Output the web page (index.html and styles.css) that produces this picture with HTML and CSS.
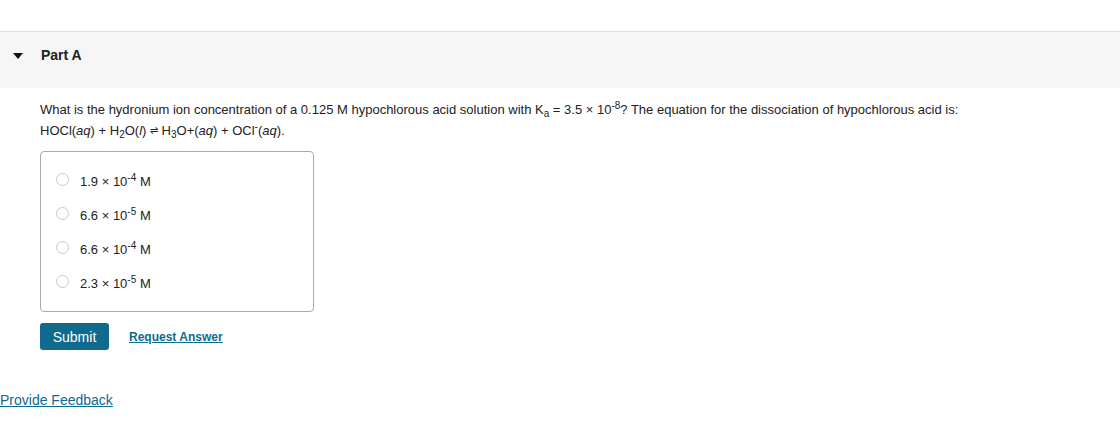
FILE: index.html
```html
<!DOCTYPE html>
<html>
<head>
<meta charset="utf-8">
<link rel="stylesheet" href="styles.css">
</head>
<body>
<div class="top-space"></div>
<div class="part-header">
  <span class="caret"></span>
  <span class="part-title">Part A</span>
</div>
<div class="part-body">
  <p class="question">What is the hydronium ion concentration of a 0.125 M hypochlorous acid solution with K<sub>a</sub> = 3.5 × 10<sup>-8</sup>? The equation for the dissociation of hypochlorous acid is:<br>HOCl(<i>aq</i>) + H<sub>2</sub>O(<i>l</i>) <span class="eq">⇌</span> H<sub>3</sub>O+(<i>aq</i>) + OCl<sup>-</sup>(<i>aq</i>).</p>
  <div class="choices">
    <label class="choice"><span class="radio"></span><span>1.9 × 10<sup>-4</sup> M</span></label>
    <label class="choice"><span class="radio"></span><span>6.6 × 10<sup>-5</sup> M</span></label>
    <label class="choice"><span class="radio"></span><span>6.6 × 10<sup>-4</sup> M</span></label>
    <label class="choice"><span class="radio"></span><span>2.3 × 10<sup>-5</sup> M</span></label>
  </div>
  <div class="actions">
    <button class="submit">Submit</button>
    <a class="request" href="#">Request Answer</a>
  </div>
</div>
<a class="feedback" href="#">Provide Feedback</a>
</body>
</html>
```
FILE: styles.css
```css
html, body {
  margin: 0;
  padding: 0;
  background: #fff;
  font-family: "Liberation Sans", Arial, Helvetica, sans-serif;
  color: #333;
}
.top-space {
  height: 31px;
}
.part-header {
  border-top: 1px solid #dcdcdc;
  background: #f6f6f6;
  height: 57px;
  box-sizing: border-box;
  padding-top: 14px;
  display: flex;
  align-items: flex-start;
}
.caret {
  width: 0;
  height: 0;
  border-left: 5px solid transparent;
  border-right: 5px solid transparent;
  border-top: 6px solid #111;
  margin-left: 13px;
  margin-top: 7px;
}
.part-title {
  margin-left: 18px;
  font-size: 14px;
  line-height: 18px;
  font-weight: bold;
  color: #222;
}
.part-body {
  padding: 11px 0 0 40px;
}
.question {
  margin: 0;
  font-size: 13px;
  line-height: 21px;
  color: #222;
}
.question sub, .question sup {
  font-size: 10px;
  line-height: 0;
}
.question sup {
  vertical-align: 5px;
}
.question sub {
  vertical-align: -3px;
}
.eq {
  font-size: 10px;
  vertical-align: 1px;
}
.choices {
  margin-top: 10px;
  width: 272px;
  height: 147px;
  border: 1px solid #a9a9a9;
  border-radius: 4px;
  box-sizing: content-box;
  padding-top: 12px;
  display: flex;
  flex-direction: column;
}
.choice {
  display: flex;
  align-items: center;
  height: 34px;
  flex: none;
  font-size: 13px;
  color: #222;
}
.choice sup {
  font-size: 10px;
  line-height: 0;
  vertical-align: 5px;
}
.radio {
  width: 11px;
  height: 11px;
  border: 1px solid #c8c8c8;
  border-radius: 50%;
  margin-left: 15px;
  margin-right: 11px;
  margin-top: -4px;
  background: #fff;
}
.actions {
  margin-top: 11px;
  display: flex;
  align-items: center;
}
.submit {
  height: 27px;
  width: 69px;
  padding: 0;
  border: 0;
  border-radius: 3px;
  background: #0f6a8d;
  color: #fff;
  font-family: "Liberation Sans", Arial, sans-serif;
  font-size: 14px;
}
.request {
  margin-left: 20px;
  font-size: 12px;
  font-weight: bold;
  color: #0e6a91;
  text-decoration: underline;
}
.feedback {
  display: inline-block;
  margin-top: 42px;
  font-size: 14px;
  color: #0e6a91;
  text-decoration: underline;
}
```
